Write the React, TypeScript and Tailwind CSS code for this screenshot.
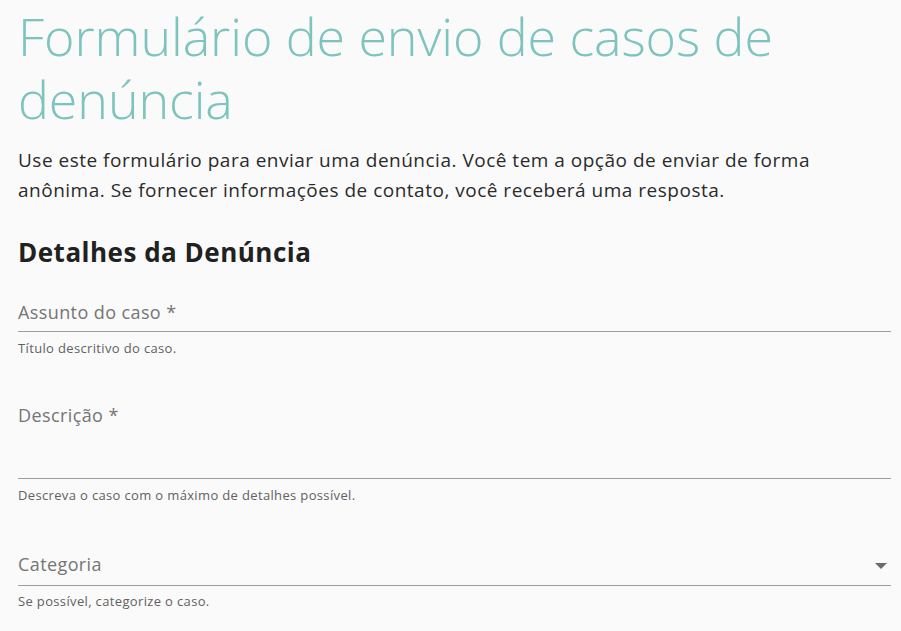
const font = { fontFamily: '"Open Sans", "Noto Sans", sans-serif' };

function Field({
  label,
  helper,
  tall,
  select,
}: {
  label: string;
  helper: string;
  tall?: boolean;
  select?: boolean;
}) {
  return (
    <div>
      <div
        className={`flex items-start justify-between border-b border-[#9e9e9e] ${
          tall ? "h-[77px]" : select ? "h-[35px]" : "h-[33px]"
        }`}
      >
        <span className="text-[18px] leading-[26px] tracking-[0.4px] text-[#757575]">{label}</span>
        {select && (
          <svg width="12" height="6" viewBox="0 0 12 6" className="mr-[4px] mt-[12px]">
            <path d="M0 0h12L6 6z" fill="#6b6b6b" />
          </svg>
        )}
      </div>
      <p className={`${select ? "mt-[7px]" : "mt-[8px]"} text-[13px] leading-[16px] tracking-[0.35px] text-[#616161]`}>
        {helper}
      </p>
    </div>
  );
}

export default function App() {
  return (
    <div className="min-h-screen bg-[#fafafa] pl-[18px] pr-[10px]" style={font}>
      <h1 className="pt-[4px] text-[52px] font-light leading-[63px] tracking-[-0.1px] text-[#7cc4bd]">
        Formulário de envio de casos de denúncia
      </h1>
      <p className="mt-[15px] text-[19px] leading-[30px] tracking-[0.5px] text-[#2b2b2b]">
        Use este formulário para enviar uma denúncia. Você tem a opção de enviar de forma
        anônima. Se fornecer informações de contato, você receberá uma resposta.
      </p>
      <h2 className="mt-[30px] text-[26px] font-bold leading-[34px] tracking-[0.5px] text-[#212121]">
        Detalhes da Denúncia
      </h2>
      <div className="mt-[30px]">
        <Field label="Assunto do caso *" helper="Título descritivo do caso." />
      </div>
      <div className="mt-[46px]">
        <Field label="Descrição *" helper="Descreva o caso com o máximo de detalhes possível." tall />
      </div>
      <div className="mt-[48px]">
        <Field label="Categoria" helper="Se possível, categorize o caso." select />
      </div>
    </div>
  );
}
